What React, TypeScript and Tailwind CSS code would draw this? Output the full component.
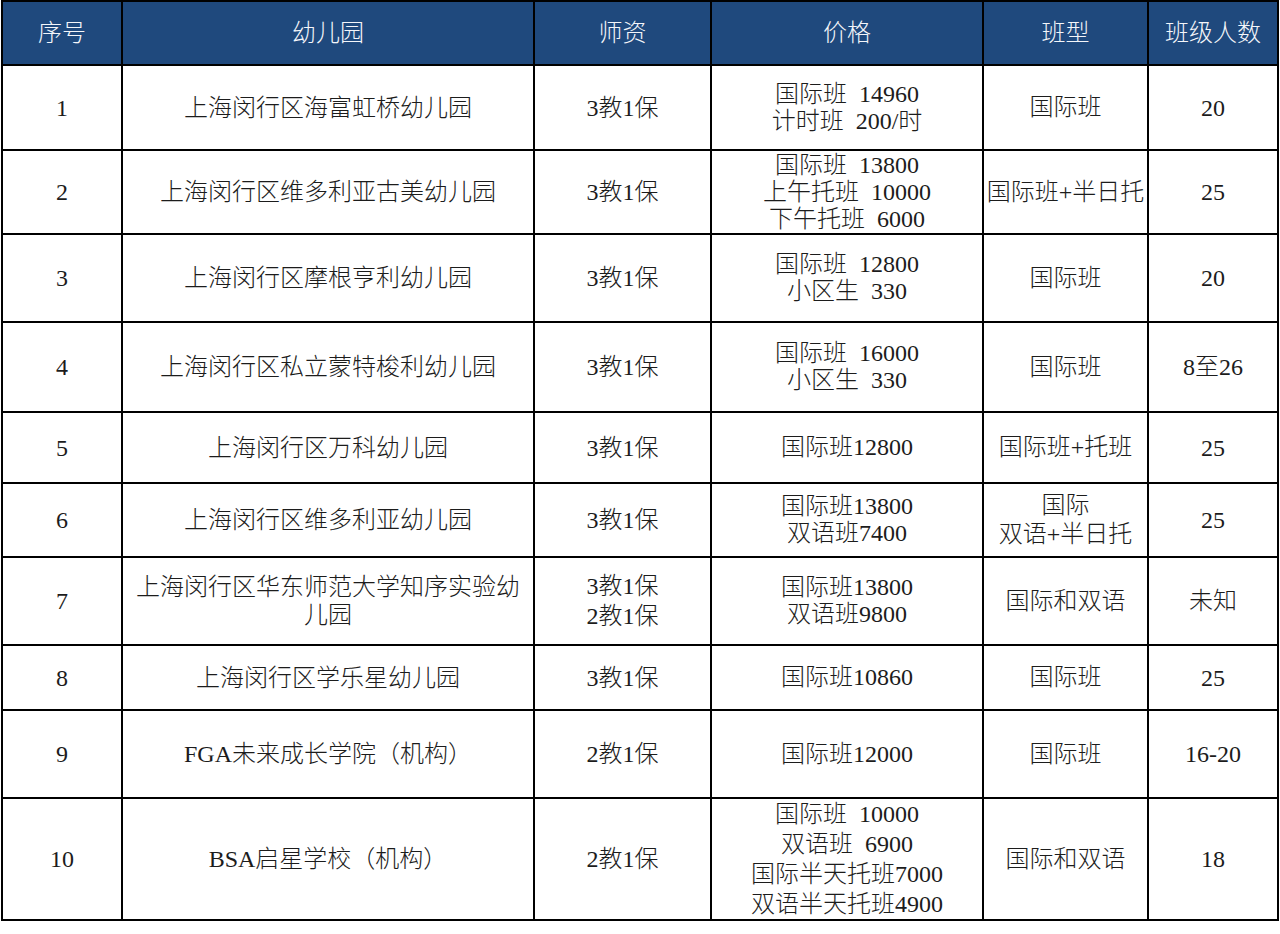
import React from 'react'

type Row = {
  no: string
  name: string[]
  teachers: string[]
  price: string[]
  type: string[]
  size: string
  h: string
  priceLeading?: string
}

const rows: Row[] = [
  { no: '1', name: ['上海闵行区海富虹桥幼儿园'], teachers: ['3教1保'], price: ['国际班  14960', '计时班  200/时'], type: ['国际班'], size: '20', h: 'h-[85px]' },
  { no: '2', name: ['上海闵行区维多利亚古美幼儿园'], teachers: ['3教1保'], price: ['国际班  13800', '上午托班  10000', '下午托班  6000'], type: ['国际班+半日托'], size: '25', h: 'h-[84px]' },
  { no: '3', name: ['上海闵行区摩根亨利幼儿园'], teachers: ['3教1保'], price: ['国际班  12800', '小区生  330'], type: ['国际班'], size: '20', h: 'h-[88px]' },
  { no: '4', name: ['上海闵行区私立蒙特梭利幼儿园'], teachers: ['3教1保'], price: ['国际班  16000', '小区生  330'], type: ['国际班'], size: '8至26', h: 'h-[90px]' },
  { no: '5', name: ['上海闵行区万科幼儿园'], teachers: ['3教1保'], price: ['国际班12800'], type: ['国际班+托班'], size: '25', h: 'h-[71px]' },
  { no: '6', name: ['上海闵行区维多利亚幼儿园'], teachers: ['3教1保'], price: ['国际班13800', '双语班7400'], type: ['国际', '双语+半日托'], size: '25', h: 'h-[74px]' },
  { no: '7', name: ['上海闵行区华东师范大学知序实验幼', '儿园'], teachers: ['3教1保', '2教1保'], price: ['国际班13800', '双语班9800'], type: ['国际和双语'], size: '未知', h: 'h-[88px]' },
  { no: '8', name: ['上海闵行区学乐星幼儿园'], teachers: ['3教1保'], price: ['国际班10860'], type: ['国际班'], size: '25', h: 'h-[65px]' },
  { no: '9', name: ['FGA未来成长学院（机构）'], teachers: ['2教1保'], price: ['国际班12000'], type: ['国际班'], size: '16-20', h: 'h-[88px]' },
  { no: '10', name: ['BSA启星学校（机构）'], teachers: ['2教1保'], price: ['国际班  10000', '双语班  6900', '国际半天托班7000', '双语半天托班4900'], type: ['国际和双语'], size: '18', h: 'h-[119px]', priceLeading: 'leading-[30px]' },
]

const headers = ['序号', '幼儿园', '师资', '价格', '班型', '班级人数']

function Lines({ lines, leading = 'leading-[27px]' }: { lines: string[]; leading?: string }) {
  return (
    <div className={`${leading} whitespace-pre`}>
      {lines.map((l, i) => (
        <div key={i}>{l}</div>
      ))}
    </div>
  )
}

export default function App() {
  const cell = 'border-2 border-black p-0 text-center align-middle'
  return (
    <div
      className="w-[1280px] h-[934px] bg-white text-[#1c1c1c] font-light"
      style={{ fontFamily: '"Liberation Serif", "Noto Sans CJK SC", serif' }}
    >
      <table className="table-fixed border-collapse w-[1277px] text-[24px] ml-px">
        <colgroup>
          <col className="w-[120px]" />
          <col className="w-[412px]" />
          <col className="w-[177px]" />
          <col className="w-[272px]" />
          <col className="w-[165px]" />
          <col className="w-[130px]" />
        </colgroup>
        <thead>
          <tr className="h-[64px] bg-[#1f497d] text-[#f4f6fa]">
            {headers.map((h) => (
              <th key={h} className={`${cell} font-light`}>
                {h}
              </th>
            ))}
          </tr>
        </thead>
        <tbody>
          {rows.map((r) => (
            <tr key={r.no} className={r.h}>
              <td className={cell}>{r.no}</td>
              <td className={cell}>
                <Lines lines={r.name} leading="leading-[28px]" />
              </td>
              <td className={cell}>
                <Lines lines={r.teachers} leading="leading-[30px]" />
              </td>
              <td className={cell}>
                <Lines lines={r.price} leading={r.priceLeading} />
              </td>
              <td className={cell}>
                <Lines lines={r.type} leading="leading-[29px]" />
              </td>
              <td className={cell}>{r.size}</td>
            </tr>
          ))}
        </tbody>
      </table>
    </div>
  )
}
